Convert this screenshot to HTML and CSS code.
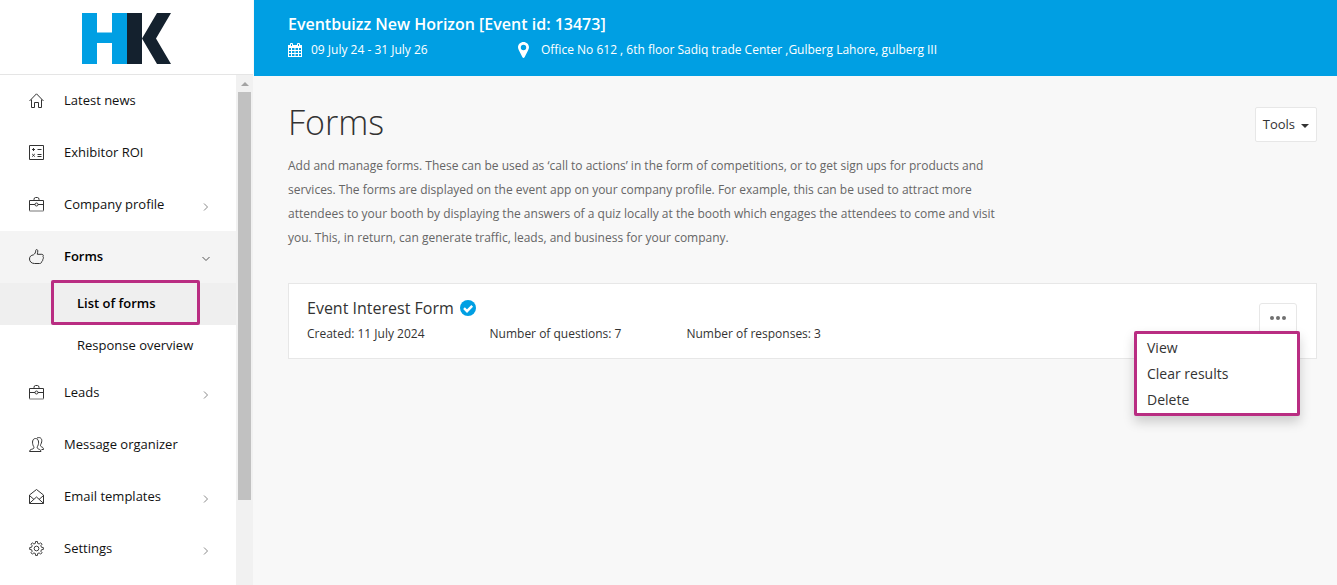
FILE: index.html
```html
<!DOCTYPE html>
<html lang="en">
<head>
  <meta charset="UTF-8">
  <meta name="viewport" content="width=device-width, initial-scale=1.0">
  <title>Forms</title>
  <link rel="stylesheet" href="styles.css">
</head>
<body>
  <svg class="sprite" aria-hidden="true">
    <symbol id="chevron" viewBox="0 0 8 8"><path d="M2 0.500l3.500 3.500L2 7.500"/></symbol>
    <symbol id="briefcase" viewBox="0 0 15 15"><path d="M0.500 14V3.500h14V14M5 3.500V2.500Q5 0.500 6.500 0.500h2Q10 0.500 10 2.500v1M0.500 7.500H6M9 7.500h5.500"/><circle cx="7.500" cy="7.500" r="1.500"/><path class="soft" d="M0.500 14h14"/></symbol>
  </svg>

  <aside class="sidebar">
    <a class="logo" href="#" aria-label="HK">
      <svg viewBox="0 0 89 51">
        <path fill="#009fe3" d="M0 0h15v19.500h15V0h15v51H30V30H15v21H0z"/>
        <path fill="#14212e" d="M45 0h15v51H45zM75 0h14L74 25.500 89 51H75L60 25.500z"/>
      </svg>
    </a>
    <div class="nav-wrap">
      <nav class="nav">
        <a class="nav-item" href="#">
          <svg class="icon" viewBox="0 0 15 15"><path d="M0.500 8L7.500 0.800 14.500 8M2.500 6.500v8H5.500V9.500h4v5h3v-8"/></svg>
          <span>Latest news</span>
        </a>
        <a class="nav-item" href="#">
          <svg class="icon" viewBox="0 0 15 15"><path d="M0.500 0.500h14v14H0.500zM3 4.500h3M4.500 3v3M8.500 4.500h4M3.200 9l2.600 2.600M5.800 9l-2.600 2.600M8.500 9.500h4M8.500 11.500h4"/></svg>
          <span>Exhibitor ROI</span>
        </a>
        <a class="nav-item" href="#">
          <svg class="icon"><use href="#briefcase"/></svg>
          <span>Company profile</span>
          <svg class="chevron"><use href="#chevron"/></svg>
        </a>
        <a class="nav-item active" href="#">
          <svg class="icon" viewBox="0 0 15 15"><path d="M4.500 5.800C6 4.800 6.700 3.500 6.700 1.500c0-1.300 2-1.300 2.100 0.300 0 1.500-0.400 2.400-0.500 3.500h4.500c1.500 0 1.800 1.400 1.200 2.300 0.700 0.900 0.500 1.900-0.200 2.500 0.200 1-0.200 1.800-0.900 2.200-0.300 1.500-1 2.200-2.400 2.200H5.500C2.500 14.500 0.500 12.500 0.500 10S2 6.300 4.500 5.800z"/></svg>
          <span>Forms</span>
          <svg class="chevron open"><use href="#chevron"/></svg>
        </a>
        <a class="sub-item current" href="#">List of forms</a>
        <a class="sub-item" href="#">Response overview</a>
        <a class="nav-item" href="#">
          <svg class="icon"><use href="#briefcase"/></svg>
          <span>Leads</span>
          <svg class="chevron"><use href="#chevron"/></svg>
        </a>
        <a class="nav-item" href="#">
          <svg class="icon" viewBox="0 0 15 15"><path d="M0.500 14.500c0-2.500 3.500-2 4.300-3.300 0.400-1 0-1.500-0.500-2.300C2.800 5.500 3.500 1.500 6.500 1.500s3.900 4 2.300 7.400c-0.500 0.800-0.900 1.400-0.400 2.300 0.900 1.300 3.600 0.900 3.600 3.300zM8 1c4-1.600 5.700 1.500 4.300 5.200-1 2-1.200 2.800 0 3.500 1.300 0.500 2.200 1 2.200 2.800h-2"/></svg>
          <span>Message organizer</span>
        </a>
        <a class="nav-item" href="#">
          <svg class="icon" viewBox="0 0 15 15"><path d="M0.500 6L7.500 0.500l7 5.500v8.500H0.500zM0.500 6.500l4.500 4M14.500 6.500L10 10.500M0.500 14.300L7.500 8l7 6.300"/></svg>
          <span>Email templates</span>
          <svg class="chevron"><use href="#chevron"/></svg>
        </a>
        <a class="nav-item" href="#">
          <svg class="icon" viewBox="0 0 16 16"><path d="M6.800 2.500L7 0.500h2l0.200 2 1.600 0.700 1.600-1.300 1.500 1.500-1.300 1.600 0.700 1.700 2 0.300v2l-2 0.300-0.700 1.600 1.300 1.600-1.500 1.500-1.600-1.300-1.600 0.700-0.200 2H7l-0.200-2-1.600-0.700L3.600 14 2.100 12.500l1.300-1.600-0.700-1.600-2-0.300V7l2-0.300 0.700-1.700-1.300-1.600 1.500-1.500 1.600 1.300z"/><circle cx="8" cy="8" r="2.500"/></svg>
          <span>Settings</span>
          <svg class="chevron"><use href="#chevron"/></svg>
        </a>
      </nav>
      <div class="scrollbar" aria-hidden="true">
        <div class="scroll-arrow"></div>
        <div class="scroll-thumb"></div>
      </div>
    </div>
  </aside>

  <div class="page">
    <header class="event-bar">
      <div class="event-title">Eventbuizz New Horizon [Event id: 13473]</div>
      <div class="event-info">
        <div class="event-date">
          <svg class="calendar" viewBox="0 0 14 14"><path fill="#fff" fill-rule="evenodd" d="M0 2h2V1q0-1 1-1h1q1 0 1 1v1h4V1q0-1 1-1h1q1 0 1 1v1h2v12H0zM3 1v2h1V1zM10 1v2h1V1zM1 5v2h2V5zM4 5v2h2.500V5zM7.500 5v2H10V5zM11 5v2h2V5zM1 8v2h2V8zM4 8v2h2.500V8zM7.500 8v2H10V8zM11 8v2h2V8zM1 11v2h2v-2zM4 11v2h2.500v-2zM7.500 11v2H10v-2zM11 11v2h2v-2z"/></svg>
          <span>09 July 24 - 31 July 26</span>
        </div>
        <div class="event-place">
          <svg class="pin" viewBox="0 0 11 16"><path fill="#fff" fill-rule="evenodd" d="M5.500 0C2.500 0 0 2.300 0 5.300c0 1.200 0.400 2 1 3.200L4.300 15q1.200 1.800 2.400 0L10 8.500c0.600-1.200 1-2 1-3.200C11 2.300 8.500 0 5.500 0zM5.500 2.800a2.700 2.700 0 1 1 0 5.400 2.700 2.700 0 0 1 0-5.400z"/></svg>
          <span>Office No 612 , 6th floor Sadiq trade Center ,Gulberg Lahore, gulberg III</span>
        </div>
      </div>
    </header>

    <main class="content">
      <div class="heading">
        <h1>Forms</h1>
        <button class="tools" type="button">Tools <span class="caret"></span></button>
      </div>
      <p class="intro">Add and manage forms. These can be used as ‘call to actions’ in the form of competitions, or to get sign ups for products and services. The forms are displayed on the event app on your company profile. For example, this can be used to attract more attendees to your booth by displaying the answers of a quiz locally at the booth which engages the attendees to come and visit you. This, in return, can generate traffic, leads, and business for your company.</p>

      <section class="card">
        <div class="card-text">
          <h2>Event Interest Form
            <svg class="check" viewBox="0 0 16 16"><circle cx="8" cy="8" r="8" fill="#009fe3"/><path d="M4 8.200l3 3 5.200-5.400" fill="none" stroke="#fff" stroke-width="2.400"/></svg>
          </h2>
          <div class="meta">
            <span>Created: 11 July 2024</span>
            <span>Number of questions: 7</span>
            <span>Number of responses: 3</span>
          </div>
        </div>
        <div class="actions">
          <button class="more" type="button" aria-label="More actions"><i></i><i></i><i></i></button>
          <div class="menu">
            <a href="#">View</a>
            <a href="#">Clear results</a>
            <a href="#">Delete</a>
          </div>
        </div>
      </section>
    </main>
  </div>
</body>
</html>
```
FILE: styles.css
```css
* {
  box-sizing: border-box;
}
body {
  margin: 0;
  display: flex;
  height: 100vh;
  overflow: hidden;
  background: #f8f8f8;
  color: #333;
  font-family: "Open Sans", sans-serif;
  font-size: 13px;
}
a {
  color: inherit;
  text-decoration: none;
}
.sprite {
  position: absolute;
  width: 0;
  height: 0;
}

/* sidebar */
.sidebar {
  flex: 0 0 254px;
  display: flex;
  flex-direction: column;
  background: #fff;
  border-right: 1px solid #f8f8f8;
}
.logo {
  flex: none;
  display: flex;
  justify-content: center;
  padding: 13px 0 10px;
  border-bottom: 1px solid #e5e5e5;
}
.logo svg {
  width: 89px;
  height: 51px;
}
.nav-wrap {
  flex: 1;
  min-height: 0;
  display: flex;
}
.nav {
  flex: 1;
  overflow: hidden;
}
.nav-item {
  display: flex;
  align-items: center;
  height: 52px;
  padding: 0 26px 2px 29px;
  color: #111;
}
.nav-item span {
  flex: 1;
  margin-left: 20px;
}
.icon {
  width: 15px;
  height: 15px;
  fill: none;
  stroke: #333;
  stroke-width: 1;
}
.soft {
  stroke: #bbb;
  stroke-width: 2;
}
.chevron {
  width: 8px;
  height: 8px;
  margin-top: 5px;
  fill: none;
  stroke: #888;
  stroke-width: 1;
}
.chevron.open {
  transform: rotate(90deg);
  stroke: #555;
}
.nav-item.active {
  background: #f4f4f4;
  color: #000;
  font-weight: 600;
}
.sub-item {
  position: relative;
  display: flex;
  align-items: center;
  height: 42px;
  padding: 0 0 2px 77px;
  color: #111;
}
.sub-item.current {
  background: #efefef;
  color: #000;
  font-weight: 600;
}
.sub-item.current::after {
  content: "";
  position: absolute;
  top: -3px;
  bottom: 0;
  left: 51px;
  right: 36px;
  border: 3px solid #b92d82;
  border-radius: 2px;
}
.scrollbar {
  flex: 0 0 17px;
  padding: 0 2px;
  background: #f1f1f1;
}
.scroll-arrow {
  display: flex;
  align-items: center;
  justify-content: center;
  height: 17px;
}
.scroll-arrow::before {
  content: "";
  border: 4px solid transparent;
  border-top: 0;
  border-bottom-color: #a3a3a3;
}
.scroll-thumb {
  height: 80%;
  background: #c1c1c1;
}

/* event header */
.page {
  flex: 1;
  min-width: 0;
}
.event-bar {
  padding: 12px 34px 16px;
  background: #009fe3;
  color: #fff;
}
.event-title {
  font-size: 16px;
  line-height: 24px;
  font-weight: 600;
}
.event-info {
  display: flex;
  padding-top: 4px;
  font-size: 12px;
  line-height: 20px;
}
.event-date,
.event-place {
  display: flex;
  align-items: center;
}
.event-date {
  width: 230px;
  gap: 9px;
}
.event-place {
  gap: 12px;
}
.calendar {
  width: 14px;
  height: 14px;
}
.pin {
  width: 11px;
  height: 16px;
}

/* content */
.content {
  padding: 20px 20px 20px 34px;
}
.heading {
  display: flex;
  justify-content: space-between;
  align-items: flex-start;
}
h1 {
  margin: 0;
  font-size: 34px;
  line-height: 52px;
  font-weight: 300;
}
.tools {
  display: flex;
  align-items: center;
  gap: 6px;
  height: 35px;
  margin-top: 11px;
  padding: 0 7px 1px;
  background: #fff;
  border: 1px solid #e7e7e7;
  border-radius: 2px;
  color: #333;
  font: inherit;
}
.caret {
  margin-top: 3px;
  border: 4px solid transparent;
  border-top-color: #333;
  border-bottom: 0;
}
.intro {
  max-width: 720px;
  margin: 6px 0 0;
  color: #666;
  font-size: 12px;
  line-height: 24px;
}
.card {
  display: flex;
  justify-content: space-between;
  margin-top: 33px;
  padding: 12px 19px 12px 18px;
  background: #fff;
  border: 1px solid #e7e7e7;
}
h2 {
  display: flex;
  align-items: center;
  gap: 6px;
  margin: 0;
  font-size: 16px;
  line-height: 24px;
  font-weight: 400;
}
.check {
  width: 16px;
  height: 16px;
}
.meta {
  display: flex;
  gap: 65px;
  padding: 3px 0 1px;
  font-size: 12px;
  line-height: 22px;
}
.actions {
  position: relative;
  padding-top: 7px;
}
.more {
  display: flex;
  align-items: center;
  justify-content: center;
  gap: 2px;
  width: 38px;
  height: 30px;
  padding: 0;
  background: #fff;
  border: 1px solid #e7e7e7;
  border-radius: 3px;
}
.more i {
  width: 4px;
  height: 4px;
  border-radius: 50%;
  background: #707070;
}
.menu {
  position: absolute;
  top: 35px;
  right: -3px;
  width: 166px;
  padding: 1px 10px 0;
  background: #fff;
  border: 3px solid #b92d82;
  border-radius: 2px;
  box-shadow: 0 6px 12px rgba(0, 0, 0, 0.18);
  font-size: 14px;
  line-height: 26px;
}
.menu a {
  display: block;
}
```
